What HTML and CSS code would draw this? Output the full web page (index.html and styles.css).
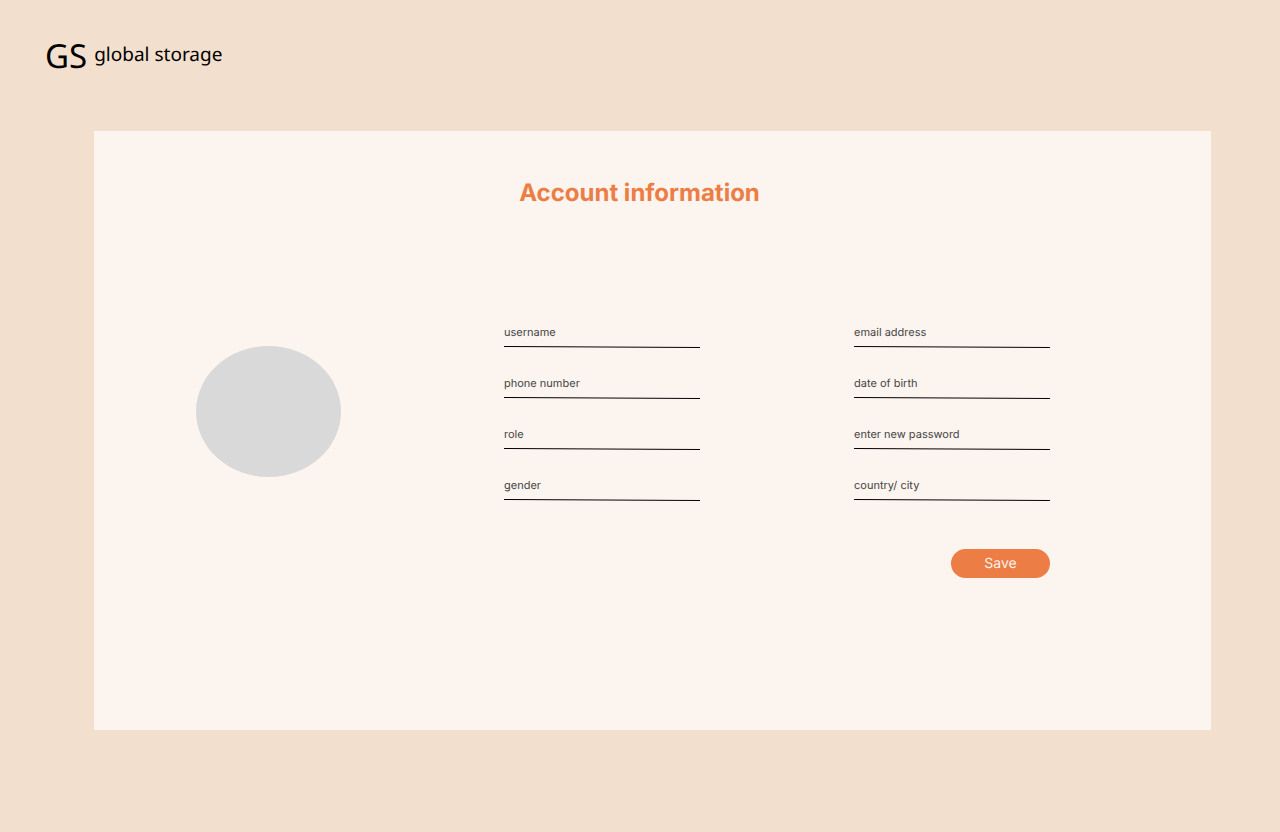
FILE: index.html
```html
<!DOCTYPE html>
<html lang="en">
<head>
<meta charset="utf-8">
<meta name="viewport" content="width=device-width, initial-scale=1">
<title>Account information</title>
<link rel="stylesheet" href="styles.css">
</head>
<body>
<header class="brand">
  <span class="brand-mark">GS</span>
  <span class="brand-name">global storage</span>
</header>
<main class="card">
  <h1 class="title">Account information</h1>
  <div class="profile">
    <div class="avatar"></div>
    <form class="form">
      <div class="column">
        <div class="field">
          <input class="input" type="text" aria-label="username" placeholder="username">
          <svg class="rule" viewBox="0 0 196 2" preserveAspectRatio="none" aria-hidden="true"><path d="M0 .5L196 1.5"/></svg>
        </div>
        <div class="field">
          <input class="input" type="tel" aria-label="phone number" placeholder="phone number">
          <svg class="rule" viewBox="0 0 196 2" preserveAspectRatio="none" aria-hidden="true"><path d="M0 .5L196 1.5"/></svg>
        </div>
        <div class="field">
          <input class="input" type="text" aria-label="role" placeholder="role">
          <svg class="rule" viewBox="0 0 196 2" preserveAspectRatio="none" aria-hidden="true"><path d="M0 .5L196 1.5"/></svg>
        </div>
        <div class="field">
          <input class="input" type="text" aria-label="gender" placeholder="gender">
          <svg class="rule" viewBox="0 0 196 2" preserveAspectRatio="none" aria-hidden="true"><path d="M0 .5L196 1.5"/></svg>
        </div>
      </div>
      <div class="column">
        <div class="field">
          <input class="input" type="email" aria-label="email address" placeholder="email address">
          <svg class="rule" viewBox="0 0 196 2" preserveAspectRatio="none" aria-hidden="true"><path d="M0 .5L196 1.5"/></svg>
        </div>
        <div class="field">
          <input class="input" type="text" aria-label="date of birth" placeholder="date of birth">
          <svg class="rule" viewBox="0 0 196 2" preserveAspectRatio="none" aria-hidden="true"><path d="M0 .5L196 1.5"/></svg>
        </div>
        <div class="field">
          <input class="input" type="password" aria-label="enter new password" placeholder="enter new password">
          <svg class="rule" viewBox="0 0 196 2" preserveAspectRatio="none" aria-hidden="true"><path d="M0 .5L196 1.5"/></svg>
        </div>
        <div class="field">
          <input class="input" type="text" aria-label="country/ city" placeholder="country/ city">
          <svg class="rule" viewBox="0 0 196 2" preserveAspectRatio="none" aria-hidden="true"><path d="M0 .5L196 1.5"/></svg>
        </div>
      </div>
      <button class="save" type="submit">Save</button>
    </form>
  </div>
</main>
</body>
</html>
```
FILE: styles.css
```css
* {
  box-sizing: border-box;
}

body {
  margin: 0;
  padding: 32px 69px 102px 94px;
  min-height: 100vh;
  background: #f2dfce;
  color: #000;
  font-family: Inter, "Liberation Sans", sans-serif;
  text-rendering: geometricPrecision;
}

.brand {
  display: flex;
  align-items: flex-start;
  gap: 7px;
  margin: 0 0 51px -49px;
  font-family: "Noto Sans", sans-serif;
  line-height: 48px;
}

.brand-mark {
  font-size: 33px;
}

.brand-name {
  font-size: 19px;
  line-height: 44px;
}

.card {
  padding: 46px 161px 152px 102px;
  background: #fcf4ef;
}

.title {
  margin: 0 0 113px;
  padding-left: 33px;
  color: #ec7d44;
  font-size: 24px;
  font-weight: 700;
  line-height: 32px;
  text-align: center;
}

.profile {
  display: grid;
  grid-template-columns: 145px 1fr;
  column-gap: 163px;
}

.avatar {
  height: 131px;
  margin-top: 24px;
  border-radius: 50%;
  background: #d9d9d9;
}

.form {
  display: grid;
  grid-template-columns: 1fr 1fr;
  gap: 48px 154px;
}

.column {
  display: grid;
  gap: 25px;
}

.field {
  display: grid;
  grid-template-rows: 24px 2px;
  min-width: 0;
}

.input {
  width: 100%;
  min-width: 0;
  height: 24px;
  margin: 0;
  padding: 0 0 4px;
  border: 0;
  outline: 0;
  background: transparent;
  color: #444;
  font-family: Inter, "Liberation Sans", sans-serif;
  font-size: 11px;
  line-height: 20px;
  text-rendering: inherit;
}

.input::placeholder {
  color: #444;
  line-height: 20px;
  opacity: 1;
}

.rule {
  display: block;
  width: 100%;
  height: 2px;
}

.rule path {
  fill: none;
  stroke: #000;
  stroke-width: 1;
}

.save {
  grid-column: 2;
  justify-self: end;
  width: 99px;
  height: 29px;
  padding: 0;
  border: 0;
  border-radius: 15px;
  background: #ec7d44;
  color: #fcf4ef;
  font: 400 14px/29px Inter, "Liberation Sans", sans-serif;
  text-rendering: inherit;
}
```
